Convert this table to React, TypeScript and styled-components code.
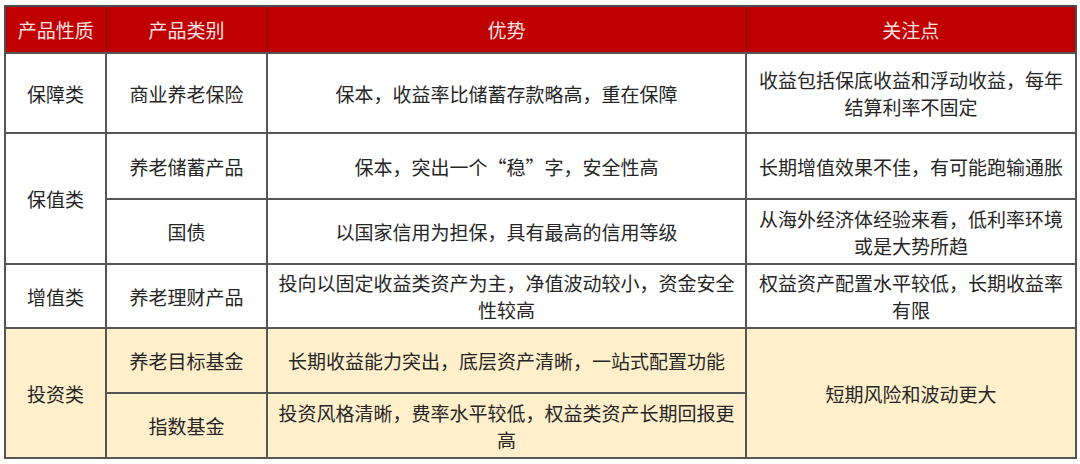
import React, { FC } from 'react';
import styled, { createGlobalStyle } from 'styled-components';

const GlobalStyle = createGlobalStyle`
  html, body {
    margin: 0;
    padding: 0;
    background: #fff;
  }
  body {
    font-family: "Noto Sans CJK SC", "Noto Sans", sans-serif;
  }
`;

const Page = styled.div`
  width: 1080px;
  height: 464px;
  padding: 5px 0 0 4px;
  box-sizing: border-box;
  background: #fff;
`;

const Table = styled.table`
  width: 1071px;
  table-layout: fixed;
  border-collapse: collapse;
  border: 2px solid #4d4d4d;
  font-size: 19px;
  line-height: 27px;
  color: #262626;
`;

const HeadRow = styled.tr`
  height: 47px;
  background: #c00000;
`;

const HeadCell = styled.th`
  font-weight: 400;
  color: #fde2e2;
  text-align: center;
  border: 1.5px solid #5a2020;
  padding: 0;
`;

const Row = styled.tr<{ $h: number }>`
  height: ${p => p.$h}px;
`;

const Cell = styled.td<{ $warm?: boolean }>`
  text-align: center;
  vertical-align: middle;
  padding: 0 8px;
  border: 2px solid #555;
  background: ${p => (p.$warm ? '#fff0cb' : '#fff')};
`;

const App: FC = () => {
  return (
    <Page>
      <GlobalStyle />
      <Table>
        <colgroup>
          <col style={{ width: 101 }} />
          <col style={{ width: 161 }} />
          <col style={{ width: 479 }} />
          <col style={{ width: 330 }} />
        </colgroup>
        <thead>
          <HeadRow>
            <HeadCell>产品性质</HeadCell>
            <HeadCell>产品类别</HeadCell>
            <HeadCell>优势</HeadCell>
            <HeadCell>关注点</HeadCell>
          </HeadRow>
        </thead>
        <tbody>
          <Row $h={80}>
            <Cell>保障类</Cell>
            <Cell>商业养老保险</Cell>
            <Cell>保本，收益率比储蓄存款略高，重在保障</Cell>
            <Cell>收益包括保底收益和浮动收益，每年结算利率不固定</Cell>
          </Row>
          <Row $h={66}>
            <Cell rowSpan={2}>保值类</Cell>
            <Cell>养老储蓄产品</Cell>
            <Cell>保本，突出一个“稳”字，安全性高</Cell>
            <Cell>长期增值效果不佳，有可能跑输通胀</Cell>
          </Row>
          <Row $h={65}>
            <Cell>国债</Cell>
            <Cell>以国家信用为担保，具有最高的信用等级</Cell>
            <Cell>从海外经济体经验来看，低利率环境或是大势所趋</Cell>
          </Row>
          <Row $h={64}>
            <Cell>增值类</Cell>
            <Cell>养老理财产品</Cell>
            <Cell>投向以固定收益类资产为主，净值波动较小，资金安全性较高</Cell>
            <Cell>权益资产配置水平较低，长期收益率有限</Cell>
          </Row>
          <Row $h={65}>
            <Cell $warm rowSpan={2}>投资类</Cell>
            <Cell $warm>养老目标基金</Cell>
            <Cell $warm>长期收益能力突出，底层资产清晰，一站式配置功能</Cell>
            <Cell $warm rowSpan={2}>短期风险和波动更大</Cell>
          </Row>
          <Row $h={65}>
            <Cell $warm>指数基金</Cell>
            <Cell $warm>投资风格清晰，费率水平较低，权益类资产长期回报更高</Cell>
          </Row>
        </tbody>
      </Table>
    </Page>
  );
};

export default App;
